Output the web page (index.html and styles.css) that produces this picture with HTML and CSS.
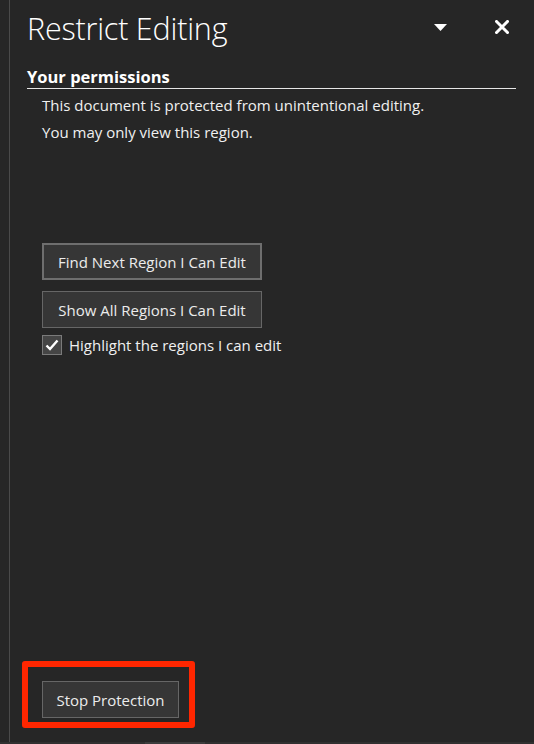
FILE: index.html
```html
<!DOCTYPE html>
<html>
<head>
<meta charset="utf-8">
<link rel="stylesheet" href="styles.css">
</head>
<body>
<div class="frame">
  <div class="panel">
    <header class="head">
      <h1 class="title">Restrict Editing</h1>
      <div class="head-icons">
        <svg class="caret" width="13" height="7" viewBox="0 0 13 7"><path d="M0 0H13L6.5 7Z" fill="#fff"/></svg>
        <svg class="close" width="14" height="14" viewBox="0 0 14 14"><path d="M1.5 1.5L12.5 12.5M12.5 1.5L1.5 12.5" stroke="#fff" stroke-width="3" stroke-linecap="square"/></svg>
      </div>
    </header>
    <section class="perm">
      <h2 class="perm-title">Your permissions</h2>
      <p class="msg">This document is protected from unintentional editing.</p>
      <p class="msg">You may only view this region.</p>
      <div class="actions">
        <button class="btn btn-focus">Find Next Region I Can Edit</button>
        <button class="btn">Show All Regions I Can Edit</button>
        <label class="check">
          <span class="box"><svg width="14" height="12" viewBox="0 0 14 12"><path d="M1.5 6.5L5 10L12.5 1.5" stroke="#fff" stroke-width="2.4" fill="none"/></svg></span>
          <span>Highlight the regions I can edit</span>
        </label>
      </div>
    </section>
    <div class="foot">
      <div class="mark">
        <button class="btn btn-stop">Stop Protection</button>
      </div>
    </div>
  </div>
</div>
<div class="strip"><span class="strip-thumb"></span></div>
</body>
</html>
```
FILE: styles.css
```css
html, body {
  margin: 0;
  padding: 0;
  background: #262626;
  font-family: "Open Sans", "Noto Sans", sans-serif;
  color: #f0f0f0;
}
.frame {
  height: 742px;
  margin-left: 9px;
  border-left: 1px solid #4a4a4a;
  box-sizing: border-box;
}
.panel {
  height: 100%;
  display: flex;
  flex-direction: column;
}
.head {
  display: flex;
  align-items: flex-start;
  padding: 7px 0 0 17px;
}
.title {
  margin: 0;
  font-weight: 300;
  font-size: 30.5px;
  line-height: 42px;
  color: #ffffff;
  letter-spacing: -0.2px;
  flex: 1;
}
.head-icons {
  display: flex;
  align-items: flex-start;
}
.caret {
  margin: 17px 0 0 0;
  display: block;
}
.close {
  margin: 13px 25px 0 48px;
  display: block;
}
.perm {
  margin: 17px 18px 0 17px;
}
.perm-title {
  margin: 0;
  font-size: 16.5px;
  font-weight: 700;
  line-height: 21px;
  border-bottom: 1px solid #e6e6e6;
  padding-bottom: 1px;
  color: #ffffff;
}
.msg {
  margin: 0 0 0 15px;
  font-size: 15px;
  line-height: 27px;
  color: #f0f0f0;
}
.msg:first-of-type {
  margin-top: 3px;
}
.actions {
  margin: 97px 0 0 15px;
  display: flex;
  flex-direction: column;
  align-items: flex-start;
  gap: 11px;
}
.btn {
  font-family: "Open Sans", "Noto Sans", sans-serif;
  font-size: 15px;
  color: #ececec;
  background: #363636;
  border: 1px solid #666666;
  height: 37px;
  width: 220px;
  padding: 0;
  box-sizing: border-box;
}
.btn-focus {
  border: 2px solid #6e6e6e;
}
.check {
  margin-top: -4px;
  display: flex;
  align-items: center;
  gap: 7px;
  font-size: 15px;
  color: #f0f0f0;
}
.box {
  width: 20px;
  height: 20px;
  box-sizing: border-box;
  border: 1px solid #7a7a7a;
  background: #454545;
  display: flex;
  align-items: center;
  justify-content: center;
}
.box svg { display: block; }
.foot {
  margin-top: auto;
  padding: 0 0 14px 12px;
}
.mark {
  display: inline-block;
  border: 6px solid #ff2600;
  border-radius: 3px;
  padding: 14px 10px 4px 14px;
}
.btn-stop {
  width: 137px;
  display: block;
}
.strip {
  height: 2px;
  background: #303030;
  position: relative;
}
.strip-thumb {
  position: absolute;
  left: 145px;
  width: 60px;
  top: 0;
  height: 2px;
  background: #3c3c3c;
}
```
